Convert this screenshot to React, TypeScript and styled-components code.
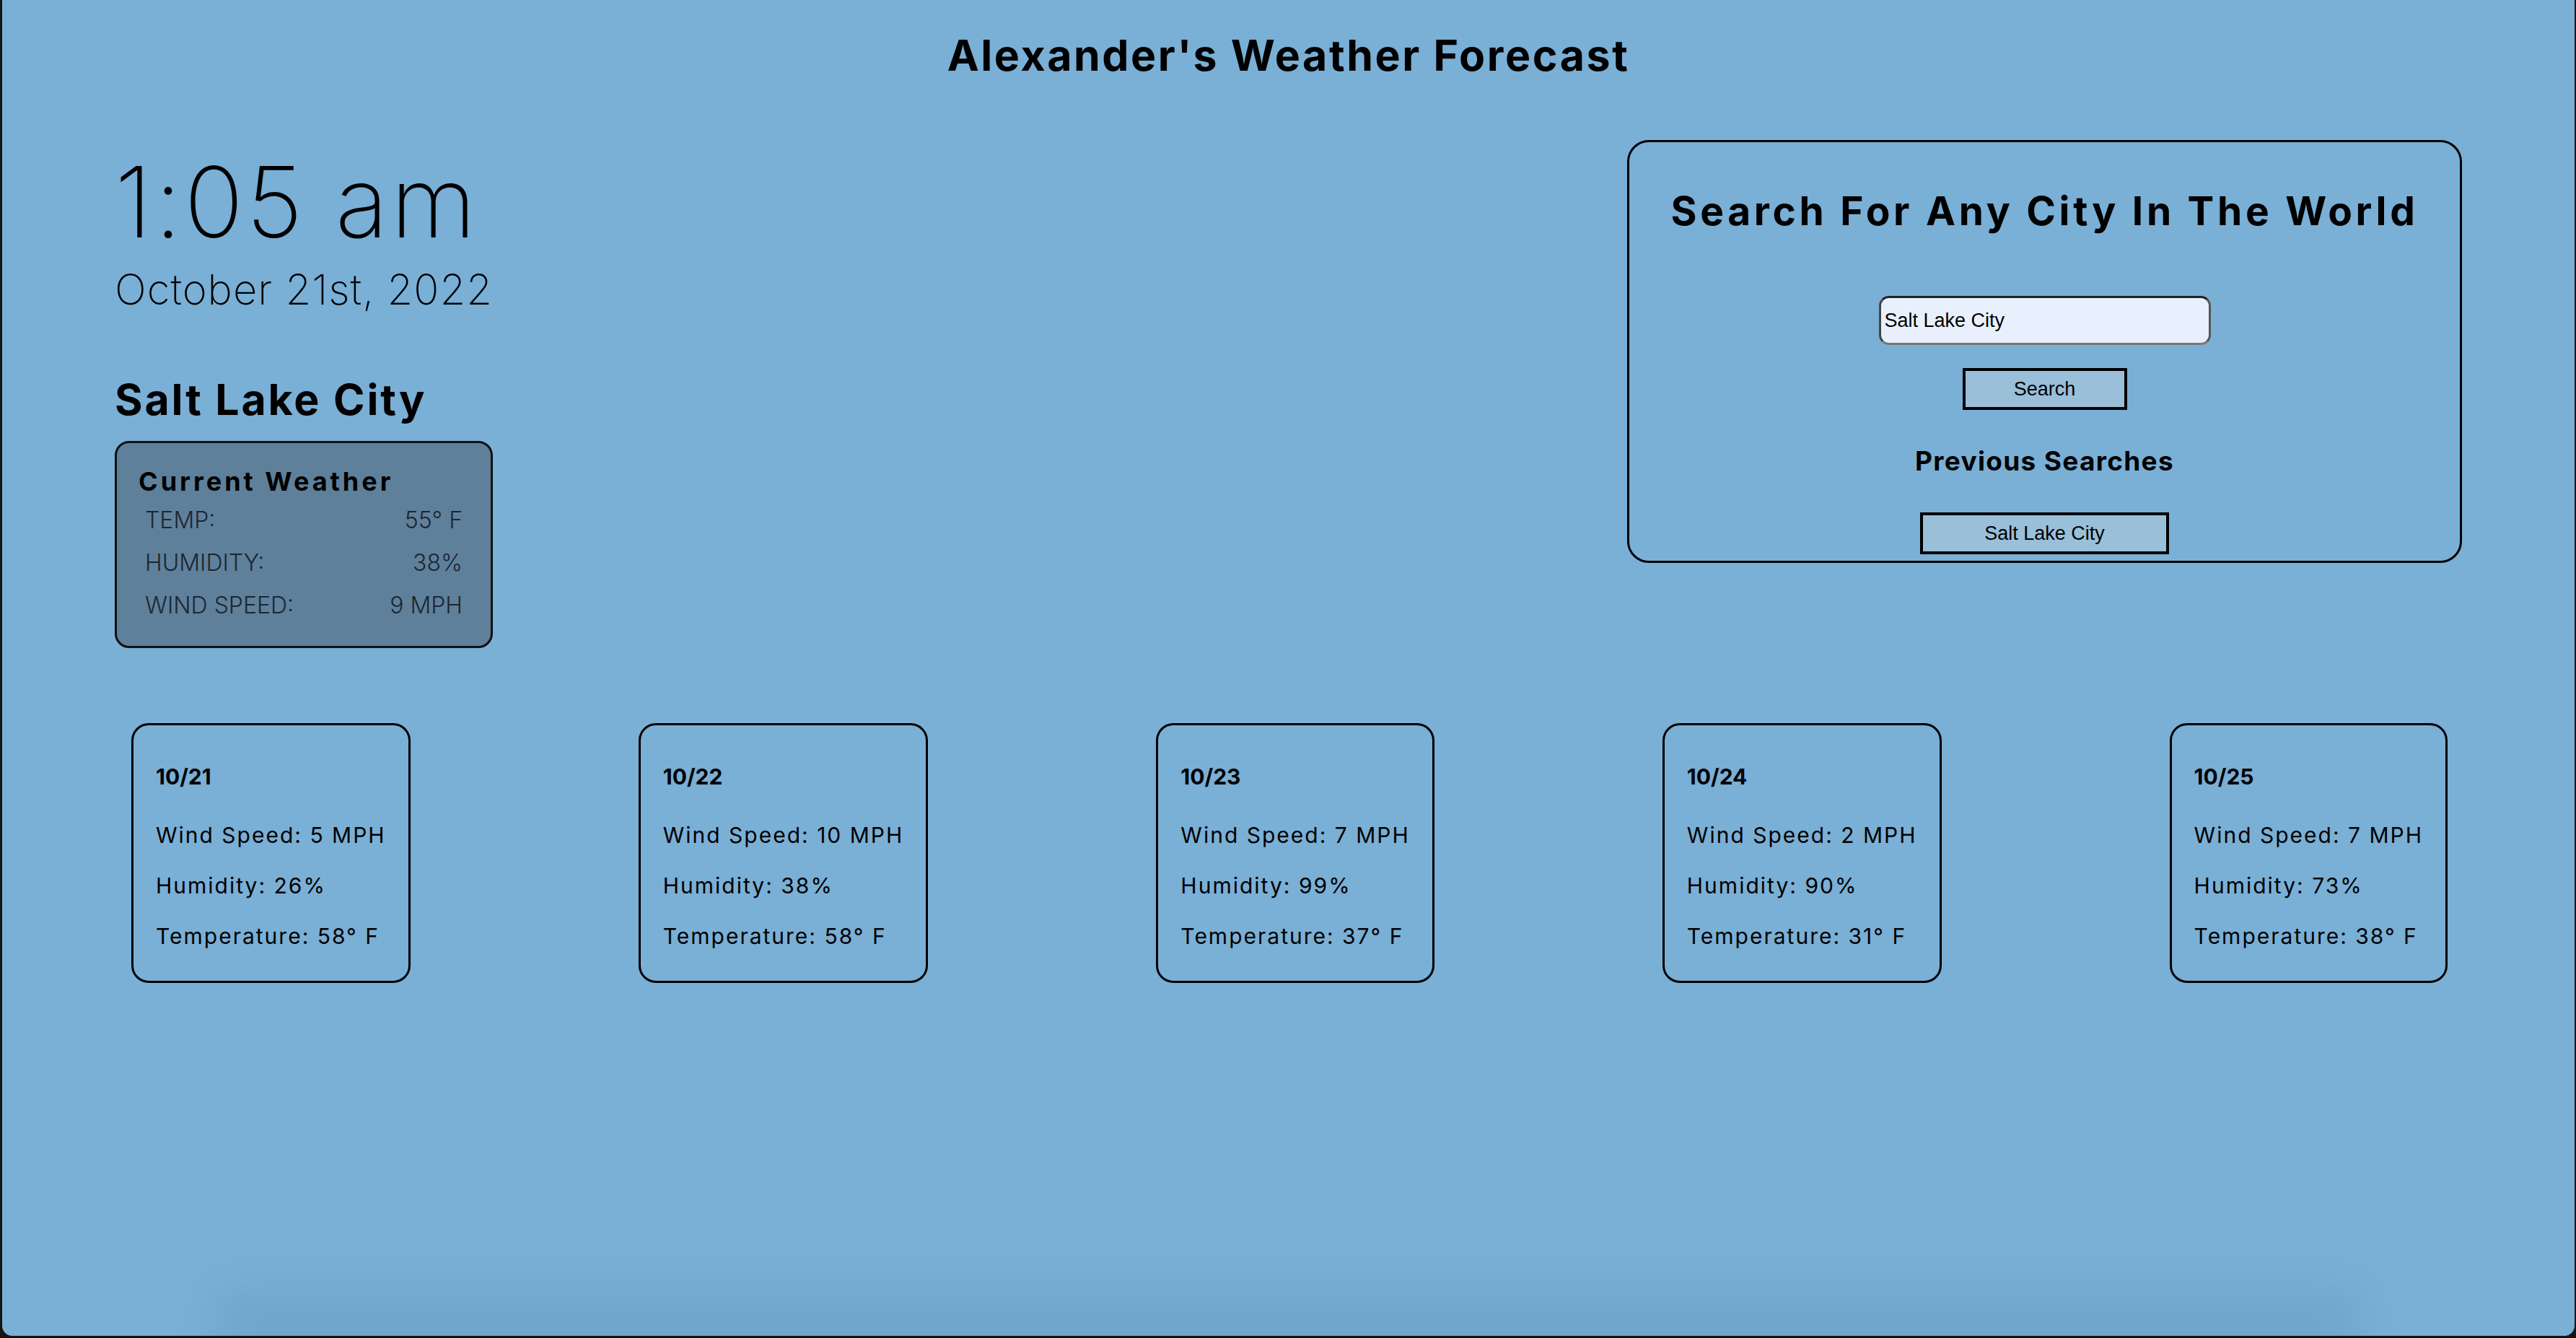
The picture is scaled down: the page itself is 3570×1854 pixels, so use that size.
import React from 'react';
import styled, { createGlobalStyle } from 'styled-components';

const sans = `'Inter', 'Noto Sans', sans-serif`;
const arial = `'Liberation Sans', Arial, sans-serif`;

const GlobalStyle = createGlobalStyle`
  html, body {
    margin: 0;
    padding: 0;
    background: #141414;
  }
  body {
    font-family: ${sans};
    color: #000;
  }
  * {
    box-sizing: border-box;
  }
`;

const Window = styled.div`
  position: relative;
  margin: 0 2px 0 3px;
  min-height: 1851px;
  background: #7aafd6;
  border-bottom-left-radius: 14px;
  border-bottom-right-radius: 14px;
  overflow: hidden;

  &::after {
    content: '';
    position: absolute;
    left: 300px;
    right: 300px;
    bottom: -20px;
    height: 80px;
    background: rgba(40, 70, 100, 0.1);
    filter: blur(30px);
    pointer-events: none;
  }
`;

const Title = styled.h1`
  margin: 0;
  padding-top: 47px;
  text-align: center;
  font-size: 59px;
  line-height: 1;
  font-weight: 700;
  letter-spacing: 2.6px;
`;

const Main = styled.main`
  display: flex;
  justify-content: space-between;
  align-items: flex-start;
  margin-top: 88px;
  padding: 0 156px 0 156px;
`;

const LeftColumn = styled.section`
  display: flex;
  flex-direction: column;
  padding-top: 18px;
`;

const Time = styled.div`
  font-size: 136px;
  line-height: 1;
  font-weight: 200;
  letter-spacing: 3.5px;
`;

const DateLine = styled.div`
  margin-top: 24px;
  font-size: 58px;
  line-height: 1;
  font-weight: 200;
  letter-spacing: 1px;
`;

const City = styled.h2`
  margin: 94px 0 0;
  font-size: 59px;
  line-height: 1;
  font-weight: 700;
  letter-spacing: 2.8px;
`;

const CurrentCard = styled.div`
  margin-top: 28px;
  width: 524px;
  padding: 35px 30px 27px;
  border: 3px solid #111;
  border-radius: 20px;
  background: #5e809b;
`;

const CardHeading = styled.h3`
  margin: 0 0 6px;
  font-size: 36px;
  line-height: 1;
  font-weight: 700;
  letter-spacing: 4px;
`;

const StatRow = styled.div`
  display: flex;
  justify-content: space-between;
  padding: 0 9px;
  font-size: 32px;
  line-height: 59px;
  font-weight: 300;
  color: #1c2630;
`;

const SearchPanel = styled.section`
  width: 1157px;
  padding: 68px 0 9px;
  border: 3px solid #000;
  border-radius: 30px;
  display: flex;
  flex-direction: column;
  align-items: center;
`;

const PanelTitle = styled.h2`
  margin: 0;
  font-size: 55px;
  line-height: 1;
  font-weight: 700;
  letter-spacing: 4.7px;
`;

const CityInput = styled.input`
  margin-top: 90px;
  width: 460px;
  height: 68px;
  padding: 0 5px;
  border: 3px solid;
  border-color: #222 #555 #777 #444;
  border-radius: 14px;
  background: #e8f0fe;
  font-family: ${arial};
  font-size: 27px;
  color: #000;
  outline: none;
`;

const PanelButton = styled.button<{ $w: number; $top: number }>`
  margin-top: ${p => p.$top}px;
  width: ${p => p.$w}px;
  height: 58px;
  padding: 0;
  border: 4px solid #000;
  background: #99bfd9;
  font-family: ${arial};
  font-size: 27px;
  color: #000;
  cursor: pointer;
`;

const SubTitle = styled.h3`
  margin: 52px 0 0;
  font-size: 37px;
  line-height: 1;
  font-weight: 700;
  letter-spacing: 1.3px;
`;

const Forecast = styled.section`
  display: flex;
  justify-content: space-between;
  align-items: flex-start;
  margin-top: 104px;
  padding: 0 176px 0 179px;
`;

const DayCard = styled.div`
  padding: 56px 31px 47px;
  border: 3px solid #000;
  border-radius: 24px;
`;

const DayDate = styled.div`
  font-size: 30px;
  line-height: 1;
  font-weight: 700;
`;

const DayLine = styled.div<{ $first?: boolean }>`
  margin-top: ${p => (p.$first ? 51 : 40)}px;
  font-size: 30px;
  line-height: 1;
  font-weight: 400;
  letter-spacing: 2px;
  white-space: nowrap;
`;

const days = [
  { date: '10/21', wind: 5, humidity: 26, temp: 58 },
  { date: '10/22', wind: 10, humidity: 38, temp: 58 },
  { date: '10/23', wind: 7, humidity: 99, temp: 37 },
  { date: '10/24', wind: 2, humidity: 90, temp: 31 },
  { date: '10/25', wind: 7, humidity: 73, temp: 38 },
];

const current = [
  { label: 'TEMP:', value: '55° F' },
  { label: 'HUMIDITY:', value: '38%' },
  { label: 'WIND SPEED:', value: '9 MPH' },
];

const App = () => {
  return (
    <>
      <GlobalStyle />
      <Window>
        <Title>Alexander's Weather Forecast</Title>
        <Main>
          <LeftColumn>
            <Time>1:05 am</Time>
            <DateLine>October 21st, 2022</DateLine>
            <City>Salt Lake City</City>
            <CurrentCard>
              <CardHeading>Current Weather</CardHeading>
              {current.map(row => (
                <StatRow key={row.label}>
                  <span>{row.label}</span>
                  <span>{row.value}</span>
                </StatRow>
              ))}
            </CurrentCard>
          </LeftColumn>
          <SearchPanel>
            <PanelTitle>Search For Any City In The World</PanelTitle>
            <CityInput defaultValue="Salt Lake City" />
            <PanelButton $w={228} $top={32}>Search</PanelButton>
            <SubTitle>Previous Searches</SubTitle>
            <PanelButton $w={345} $top={53}>Salt Lake City</PanelButton>
          </SearchPanel>
        </Main>
        <Forecast>
          {days.map(d => (
            <DayCard key={d.date}>
              <DayDate>{d.date}</DayDate>
              <DayLine $first>Wind Speed: {d.wind} MPH</DayLine>
              <DayLine>Humidity: {d.humidity}%</DayLine>
              <DayLine>Temperature: {d.temp}° F</DayLine>
            </DayCard>
          ))}
        </Forecast>
      </Window>
    </>
  );
};

export default App;
